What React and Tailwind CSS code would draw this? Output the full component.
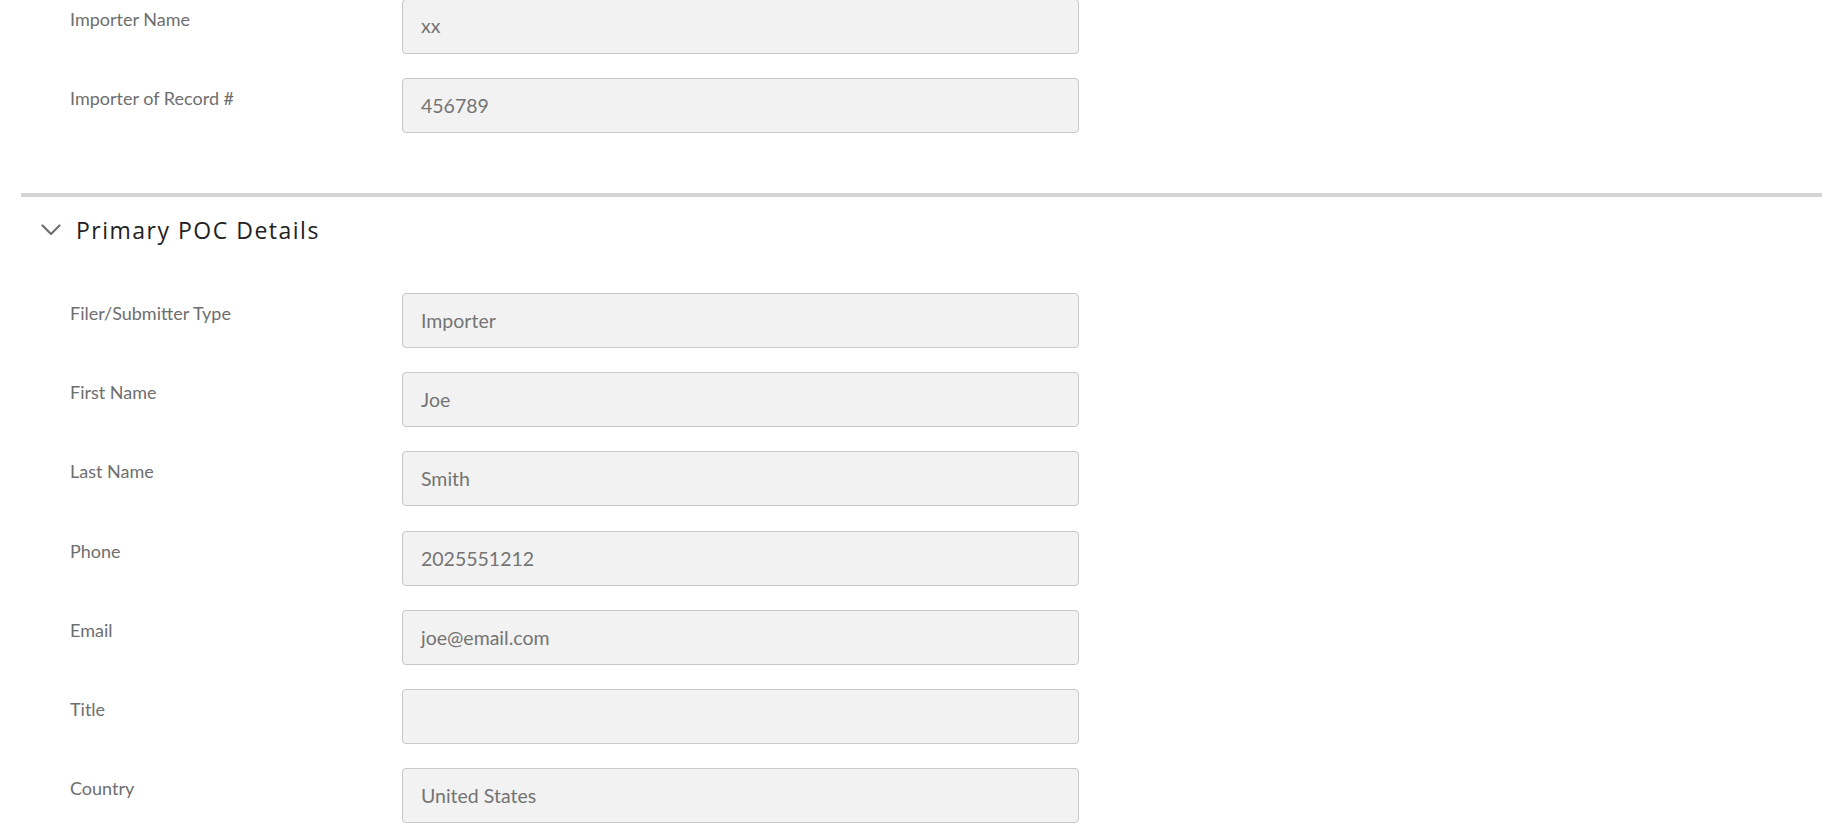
import React from "react";

function Field({ label, value }) {
  return (
    <div className="flex items-start pl-[70px]">
      <div className="w-[332px] shrink-0 pt-[8px] text-[18px] leading-[24px] text-[#6e6e6e]">
        {label}
      </div>
      <div className="flex h-[55px] w-[677px] shrink-0 items-center rounded-[4px] border border-[#c8c8c8] bg-[#f2f2f2] pl-[18px] text-[19.5px] text-[#747474]">
        {value}
      </div>
    </div>
  );
}

export default function App() {
  return (
    <div
      className="min-h-[835px] w-full overflow-hidden bg-white"
      style={{ fontFamily: "Lato, 'Open Sans', sans-serif" }}
    >
      <div className="-mt-[1.5px] flex flex-col gap-[24.3px]">
        <Field label="Importer Name" value="xx" />
        <Field label="Importer of Record #" value="456789" />
      </div>

      <div className="ml-[21px] mt-[60.5px] h-[3.5px] bg-[#d4d4d4]" />

      <div className="mt-[18px] flex h-[30px] items-center pl-[41px]">
        <svg width="20" height="12" viewBox="0 0 20 12" className="shrink-0">
          <path
            d="M1.5 1.5 L10 10 L18.5 1.5"
            fill="none"
            stroke="#707070"
            strokeWidth="2.2"
            strokeLinecap="round"
            strokeLinejoin="round"
          />
        </svg>
        <h2
          className="ml-[15px] text-[23px] font-medium tracking-[1.5px] text-[#222222]"
          style={{ fontFamily: "'Open Sans', sans-serif" }}
        >
          Primary POC Details
        </h2>
      </div>

      <div className="mt-[48.3px] flex flex-col gap-[24.2px]">
        <Field label="Filer/Submitter Type" value="Importer" />
        <Field label="First Name" value="Joe" />
        <Field label="Last Name" value="Smith" />
        <Field label="Phone" value="2025551212" />
        <Field label="Email" value="joe@email.com" />
        <Field label="Title" value="" />
        <Field label="Country" value="United States" />
      </div>
    </div>
  );
}
